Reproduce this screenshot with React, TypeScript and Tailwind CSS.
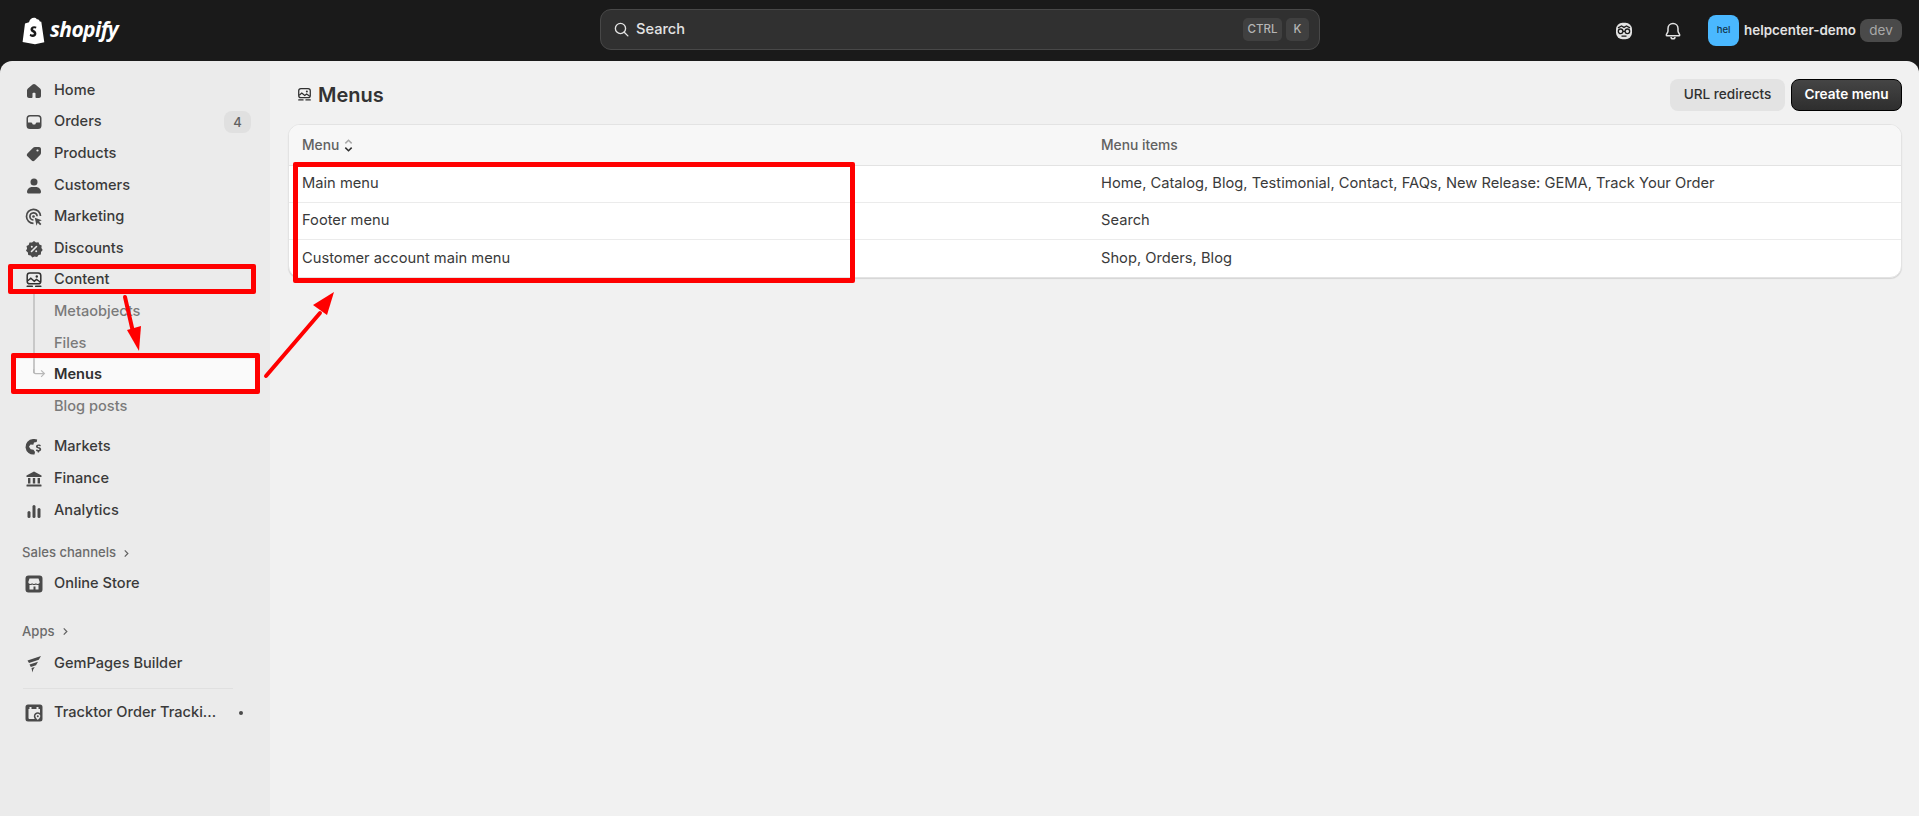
import type { ReactNode } from "react";

const Ico = ({ children, className = "w-5 h-5 text-[#4a4a4a]" }: { children: ReactNode; className?: string }) => (
  <svg viewBox="0 0 20 20" fill="currentColor" className={className}>
    {children}
  </svg>
);

const HomeIcon = () => (
  <Ico>
    <path d="M10 3c-.5 0-1 .2-1.400.5l-4.700 4c-.6.5-.9 1.200-.9 2v5.500c0 1.200 1 2 2 2h2.500c.5 0 1-.4 1-1v-3.500c0-.5.300-.8.800-.8h1.400c.5 0 .8.300.8.800v3.500c0 .6.500 1 1 1h2.500c1 0 2-.8 2-2v-5.500c0-.8-.3-1.500-.9-2l-4.700-4c-.4-.3-.9-.5-1.400-.5z" />
  </Ico>
);
const OrdersIcon = () => (
  <Ico>
    <path fillRule="evenodd" d="M6 3h8a3.500 3.500 0 0 1 3.500 3.500v7a3.500 3.500 0 0 1-3.500 3.500h-8a3.500 3.500 0 0 1-3.500-3.500v-7a3.500 3.500 0 0 1 3.500-3.500zm-2 7.500h3.200c.5 0 .8.300 1 .7l.3.700c.2.400.5.600 1 .6h1c.5 0 .8-.2 1-.6l.3-.7c.2-.4.5-.7 1-.7h3.200v-4c0-1.100-.9-2-2-2h-8c-1.100 0-2 .9-2 2z" />
  </Ico>
);
const TagIcon = () => (
  <Ico>
    <path d="M11 3h4c1.100 0 2 .9 2 2v4c0 .8-.3 1.500-.9 2.100l-5.500 5.500c-.8.800-2.100.8-2.900 0l-4.300-4.300c-.8-.8-.8-2.100 0-2.900l5.500-5.500c.6-.6 1.300-.9 2.100-.9z" />
    <circle cx="13.500" cy="6.500" r="1.100" fill="#ebebeb" />
  </Ico>
);
const PersonIcon = () => (
  <Ico>
    <circle cx="10" cy="6" r="3.500" />
    <path d="M3 16c0-2.800 2.400-5 5-5h4c2.600 0 5 2.200 5 5 0 .8-.7 1.500-1.500 1.500h-11c-.8 0-1.500-.7-1.500-1.500z" />
  </Ico>
);
const TargetIcon = () => (
  <Ico>
    <path
      fill="none"
      stroke="currentColor"
      strokeWidth="1.700"
      d="M9.500 16.300a7 7 0 1 1 7-7.300M9.500 13a3.600 3.600 0 1 1 3.600-3.800"
    />
    <circle cx="9.500" cy="9.500" r="1.300" />
    <path d="M10.800 10.800l7 2.400-2.800 1.300 2.400 2.400-1.300 1.300-2.400-2.400-1.200 2.900z" />
  </Ico>
);
const DiscountIcon = () => (
  <Ico>
    <path d="M10 2l2 1.500 2.500-.2.900 2.300 2.300 1-.3 2.500 1.300 2-1.700 1.800-.1 2.500-2.400.6-1.400 2.100-2.500-.7-2.300 1-1.600-2-2.500-.4-.3-2.500-1.900-1.700 1.100-2.300-.6-2.400 2.200-1.200.8-2.400 2.500.1z" />
    <path stroke="#ebebeb" strokeWidth="1.600" strokeLinecap="round" d="M12.500 7.500l-5 5" />
    <circle cx="7.800" cy="7.800" r="1" fill="#ebebeb" />
    <circle cx="12.200" cy="12.200" r="1" fill="#ebebeb" />
  </Ico>
);
const ContentIcon = ({ className }: { className?: string }) => (
  <Ico className={className}>
    <rect x="3.200" y="3" width="13.600" height="10.800" rx="2.600" fill="none" stroke="currentColor" strokeWidth="1.500" />
    <path d="M3.800 10.800l3-2.600 3.500 3 2.200-1.700 3.700 2.500" fill="none" stroke="currentColor" strokeWidth="1.500" />
    <circle cx="12.800" cy="6.500" r="1.200" />
    <rect x="2.500" y="15.600" width="6.500" height="1.500" rx=".7" />
    <rect x="11" y="15.600" width="6.500" height="1.500" rx=".7" />
  </Ico>
);
const MarketsIcon = () => (
  <Ico>
    <path d="M9 2a7.800 7.800 0 1 0 1.500 15.500l.5-2.500-1.500-2.200-2.800-.6-1.700-2.400 1.500-2.300 2.800.3.700-2.300 2.700-.5.500-2.500a7.800 7.800 0 0 0-3.200-.5z" />
    <path d="M14.500 7.500c-1.400 0-2.500.7-2.500 2 0 2.400 3.500 1.600 3.500 2.800 0 .5-.5.700-1 .7-.6 0-1.300-.3-1.800-.8l-.8 1.200c.5.500 1.200.9 1.800 1v1.100h1.400v-1.100c1.200-.2 2.100-1 2.100-2.200 0-2.500-3.500-1.800-3.500-2.800 0-.4.400-.6.900-.6.600 0 1 .2 1.500.6l.8-1.100c-.5-.5-1.100-.8-1.700-.9z" />
  </Ico>
);
const BankIcon = () => (
  <Ico>
    <path d="M10 2.500l7.500 4v1.500h-15v-1.500z" />
    <rect x="4" y="9" width="2.400" height="5.500" />
    <rect x="8.800" y="9" width="2.400" height="5.500" />
    <rect x="13.600" y="9" width="2.400" height="5.500" />
    <rect x="2.500" y="15.500" width="15" height="2" rx=".5" />
  </Ico>
);
const ChartIcon = () => (
  <Ico>
    <rect x="3.500" y="10" width="3" height="7" rx="1.500" />
    <rect x="8.500" y="4" width="3" height="13" rx="1.500" />
    <rect x="13.500" y="7" width="3" height="10" rx="1.500" />
  </Ico>
);
const StoreIcon = () => (
  <Ico>
    <path
      fillRule="evenodd"
      d="M4.500 1.500h11a3 3 0 0 1 3 3v11a3 3 0 0 1-3 3h-11a3 3 0 0 1-3-3v-11a3 3 0 0 1 3-3zm1 3l-1.200 3.500c0 1.200 1 2 2 2 .7 0 1.300-.3 1.800-.8.400.5 1.100.8 1.900.8s1.500-.3 1.900-.8c.5.500 1.100.8 1.800.8 1 0 2-.8 2-2l-1.200-3.500zm0 6.500v4.500h4v-3h2v3h3v-4.500c-1 .2-1.700 0-2.500-.5-.9.700-2.900.7-3.800 0-.8.500-1.700.7-2.700.5z"
    />
  </Ico>
);
const GemIcon = () => (
  <Ico>
    <path d="M3.500 6.500l13.500-4.500-2.200 3.800-9.800 3.200zM5.500 10.500l8.500-2.700-2 3.400-5.200 1.700zM7.500 14l3.300-1-1.600 2.500-.8 3z" />
  </Ico>
);
const TrackIcon = () => (
  <Ico>
    <path
      fillRule="evenodd"
      d="M4 1.500h12a2.500 2.500 0 0 1 2.500 2.500v12a2.500 2.500 0 0 1-2.500 2.500h-12a2.500 2.500 0 0 1-2.500-2.500v-12a2.500 2.500 0 0 1 2.500-2.500zm1.500 2.500v2h-1v9c0 .5.500 1 1 1h5.200c-.5-.9-.9-1.800-.9-2.700 0-2.500 2-4 4-4 .8 0 1.700.2 2.200.7v-4h-1.500v-2h-2v2h-5v-2zm8.300 6.700c-1.300 0-2.500 1-2.500 2.400 0 1.500 1.500 3 2.500 3.900 1-.9 2.500-2.400 2.500-3.900 0-1.400-1.200-2.400-2.500-2.400zm0 1.500a1 1 0 1 1 0 2 1 1 0 0 1 0-2z"
    />
  </Ico>
);

const NavRow = ({
  icon,
  label,
  children,
  className = "",
}: {
  icon: ReactNode;
  label: string;
  children?: ReactNode;
  className?: string;
}) => (
  <div className={`h-[31.6px] flex items-center pl-[24px] pr-[19px] gap-[10px] text-[14.6px] font-[450] text-[#3a3a3a] ${className}`}>
    <span className="w-5 h-5 flex items-center justify-center shrink-0">{icon}</span>
    <span className="flex-1 whitespace-nowrap">{label}</span>
    {children}
  </div>
);

const SubRow = ({ label, active }: { label: string; active?: boolean }) => (
  <div
    className={`relative h-[31.6px] flex items-center text-[14.6px] ${
      active ? "bg-[#fafafa] text-[#303030] font-semibold mx-[12px] pl-[42px] rounded-[8px]" : "pl-[54px] font-[450] text-[#7a7a7a]"
    }`}
  >
    {label}
  </div>
);

const SectionLabel = ({ label, className = "" }: { label: string; className?: string }) => (
  <div className={`flex items-center gap-[7px] pl-[22px] text-[13.1px] font-medium text-[#6b6b6b] ${className}`}>
    {label}
    <svg viewBox="0 0 8 10" className="w-[7px] h-[9px] text-[#616161]" fill="none" stroke="currentColor" strokeWidth="1.400">
      <path d="M2 1.500l3.500 3.500-3.500 3.500" />
    </svg>
  </div>
);

const rows = [
  ["Main menu", "Home, Catalog, Blog, Testimonial, Contact, FAQs, New Release: GEMA, Track Your Order"],
  ["Footer menu", "Search"],
  ["Customer account main menu", "Shop, Orders, Blog"],
];

export default function App() {
  return (
    <div className="relative w-[1919px] h-[816px] overflow-hidden bg-[#1a1a1a] font-['Inter',sans-serif] text-[#303030]">
      {/* Top bar */}
      <header className="h-[61px] flex items-center relative">
        <div className="flex items-center pl-[22px] gap-[4px]">
          <svg viewBox="0 0 24 28" className="w-[24px] h-[28px]" fill="#fff">
            <path d="M3 6.500l4-1.300C7.800 2.500 9.500.800 12 .800c1.200 0 2.200.5 2.800 1.400 1.800-.3 2.700 1 3 2.300l1.500.2 3 20.500-9.300 2-12.400-2.300z" />
            <path d="M14.500 9.800c-.5-.3-1.400-.6-2.300-.6-2.400 0-3.700 1.600-3.700 3.200 0 2.600 3.400 2.900 3.400 4.200 0 .6-.5 1-1.200 1-1.100 0-2.400-.9-2.400-.9l-.6 2.100s1 1.200 3 1.200c2.200 0 3.700-1.500 3.700-3.600 0-3-3.300-3.200-3.300-4.200 0-.3.200-.9 1.300-.9.900 0 1.500.3 1.500.3z" fill="#1a1a1a" />
          </svg>
          <span className="font-['Open_Sans',sans-serif] italic font-bold text-[21px] leading-none text-white tracking-[-0.6px] mt-[-3px]">
            shopify
          </span>
        </div>

        {/* Search */}
        <div className="absolute left-[600px] top-[9px] w-[720px] h-[41px] rounded-[11px] bg-[#303030] border border-[#484848] flex items-center pl-[12px] pr-[10px]">
          <svg viewBox="0 0 20 20" className="w-[17px] h-[17px] text-[#e3e3e3]" fill="none" stroke="currentColor" strokeWidth="1.600">
            <circle cx="8.800" cy="8.800" r="6" />
            <path d="M13.200 13.200l4.300 4.300" strokeLinecap="round" />
          </svg>
          <span className="ml-[6px] text-[14.6px] font-medium text-[#e3e3e3]">Search</span>
          <span className="ml-auto h-[23px] w-[39px] justify-center rounded-[5px] bg-[#404040] text-[11.5px] font-medium text-[#b5b5b5] flex items-center">
            CTRL
          </span>
          <span className="ml-[4px] h-[23px] w-[23px] justify-center rounded-[5px] bg-[#404040] text-[11.5px] font-medium text-[#b5b5b5] flex items-center">
            K
          </span>
        </div>

        {/* Right cluster */}
        <div className="ml-auto flex items-center pr-[17px]">
          <svg viewBox="0 0 20 20" className="w-[20px] h-[20px] mr-[29px]">
            <rect x="2" y="1.800" width="16" height="16.400" rx="6.500" fill="#e3e3e3" />
            <path d="M4 6.800l3.500-1.800 2.500 1.400 2.500-1.400 3.500 1.800" fill="none" stroke="#1a1a1a" strokeWidth="1.300" />
            <circle cx="6.600" cy="10.300" r="2.300" fill="#e3e3e3" stroke="#1a1a1a" strokeWidth="1.300" />
            <circle cx="13.400" cy="10.300" r="2.300" fill="#e3e3e3" stroke="#1a1a1a" strokeWidth="1.300" />
            <path d="M8.900 10.300h2.200M7.500 15.200h5" fill="none" stroke="#1a1a1a" strokeWidth="1.300" />
          </svg>
          <svg viewBox="0 0 20 20" className="w-[20px] h-[20px] mr-[25px] text-[#e3e3e3]" fill="none" stroke="currentColor" strokeWidth="1.500">
            <path d="M10 2.500c-3 0-5 2.200-5 5v2.500c0 1.500-1.700 3-1.700 4 0 .4.300.8.800.8h11.800c.5 0 .8-.4.800-.8 0-1-1.700-2.500-1.700-4V7.500c0-2.800-2-5-5-5z" strokeLinejoin="round" />
            <path d="M8 16c0 1 .8 1.800 2 1.800s2-.8 2-1.800" />
          </svg>
          <div className="w-[31px] h-[31px] rounded-[8px] bg-[#4ab8ff] flex items-center justify-center text-[9.5px] font-medium text-[#10334a]">
            hel
          </div>
          <span className="ml-[5px] text-[13.4px] font-semibold text-[#e3e3e3]">helpcenter-demo</span>
          <span className="ml-[4px] h-[23px] w-[42px] rounded-[8px] bg-[#4a4a4a] flex items-center justify-center text-[13.5px] text-[#a8a8a8]">
            dev
          </span>
        </div>
      </header>

      {/* Body */}
      <div className="h-[755px] flex rounded-t-[12px] overflow-hidden">
        <aside className="w-[270px] shrink-0 bg-[#ebebeb] pt-[14px]">
          <NavRow icon={<HomeIcon />} label="Home" />
          <NavRow icon={<OrdersIcon />} label="Orders">
            <span className="w-[27px] h-[22px] rounded-[8px] bg-[#e0e0e0] text-[#616161] text-[13px] flex items-center justify-center">4</span>
          </NavRow>
          <NavRow icon={<TagIcon />} label="Products" />
          <NavRow icon={<PersonIcon />} label="Customers" />
          <NavRow icon={<TargetIcon />} label="Marketing" />
          <NavRow icon={<DiscountIcon />} label="Discounts" />
          <NavRow icon={<ContentIcon className="w-5 h-5 text-[#303030]" />} label="Content" />
          <div className="relative">
            <SubRow label="Metaobjects" />
            <SubRow label="Files" />
            <SubRow label="Menus" active />
            <SubRow label="Blog posts" />
            <span className="absolute left-[33px] top-[-3px] h-[80px] w-[2px] bg-[#c8c8c8]" />
            <svg viewBox="0 0 16 12" className="absolute left-[33px] top-[73px] w-[13px] h-[10px] text-[#b8b8b8]" fill="none" stroke="currentColor" strokeWidth="1.500">
              <path d="M.800 0v3c0 1.500 1 2.500 2.500 2.500h11M10 1.500l4 4-4 4" />
            </svg>
          </div>
          <div className="h-[9px]" />
          <NavRow icon={<MarketsIcon />} label="Markets" />
          <NavRow icon={<BankIcon />} label="Finance" />
          <NavRow icon={<ChartIcon />} label="Analytics" />
          <SectionLabel label="Sales channels" className="h-[20px] mt-[17px] mb-[5px]" />
          <NavRow icon={<StoreIcon />} label="Online Store" />
          <SectionLabel label="Apps" className="h-[20px] mt-[22px] mb-[6px]" />
          <NavRow icon={<GemIcon />} label="GemPages Builder" />
          <div className="h-px bg-[#e0e0e0] ml-[23px] mr-[37px] mt-[8px] mb-[9px]" />
          <NavRow icon={<TrackIcon />} label="Tracktor Order Tracki...">
            <span className="w-[4px] h-[4px] rounded-full bg-[#4a4a4a] mr-[8px]" />
          </NavRow>
        </aside>

        <main className="flex-1 bg-[#f1f1f1] pl-[18px] pr-[17px]">
          <div className="h-[63px] flex items-center pt-[4px]">
            <div className="flex items-center gap-[5px] pl-[8px] flex-1">
              <ContentIcon className="w-[17px] h-[17px] text-[#303030]" />
              <h1 className="text-[20px] font-semibold text-[#333333]">Menus</h1>
            </div>
            <button className="w-[115px] h-[32px] rounded-[8px] bg-[#e3e3e3] text-[13.6px] font-medium text-[#303030]">URL redirects</button>
            <button className="ml-[6px] w-[111px] h-[32px] rounded-[8px] bg-gradient-to-b from-[#454545] to-[#2e2e2e] border border-black text-[13.6px] font-semibold text-white">
              Create menu
            </button>
          </div>
          <div className="rounded-[12px] border border-[#e3e3e3] bg-white overflow-hidden shadow-[0_1px_1px_rgba(0,0,0,0.12)]">
            <div className="h-[41px] bg-[#f7f7f7] border-b border-[#e3e3e3] grid grid-cols-2 items-center text-[13.8px] font-medium text-[#616161]">
              <div className="pl-[13px] flex items-center gap-[3px]">
                Menu
                <svg viewBox="0 0 10 16" className="w-[13px] h-[17px]" fill="none" strokeWidth="1.400">
                  <path d="M2 6l3-3 3 3" stroke="#a8a8a8" />
                  <path d="M2 10l3 3 3-3" stroke="#303030" />
                </svg>
              </div>
              <div className="pl-[6px]">Menu items</div>
            </div>
            {rows.map(([name, items], i) => (
              <div
                key={name}
                className={`h-[37px] pb-[1px] grid grid-cols-2 items-center text-[14.7px] text-[#3a3a3a] ${i < 2 ? "border-b border-[#ebebeb]" : ""}`}
              >
                <div className="pl-[13px]">{name}</div>
                <div className="pl-[6px]">{items}</div>
              </div>
            ))}
          </div>
        </main>
      </div>

      {/* Red annotations on top of the screenshot */}
      <div className="absolute left-[8px] top-[264px] w-[248px] h-[30px] border-[5px] border-[#ff0000] rounded-[2px]" />
      <div className="absolute left-[11px] top-[353px] w-[249px] h-[41px] border-[5px] border-[#ff0000] rounded-[2px]" />
      <div className="absolute left-[293px] top-[162px] w-[562px] h-[121px] border-[5px] border-[#ff0000] rounded-[2px]" />
      <svg className="absolute left-0 top-0 w-[1919px] h-[816px] pointer-events-none" viewBox="0 0 1919 816">
        <path d="M125 297l8 35" stroke="#ff0000" strokeWidth="4" strokeLinecap="round" />
        <path d="M127 330l14-4-2 25z" fill="#ff0000" />
        <path d="M266 376l54-63" stroke="#ff0000" strokeWidth="4" strokeLinecap="round" />
        <path d="M313 305l21-13-7 23z" fill="#ff0000" />
      </svg>
    </div>
  );
}
